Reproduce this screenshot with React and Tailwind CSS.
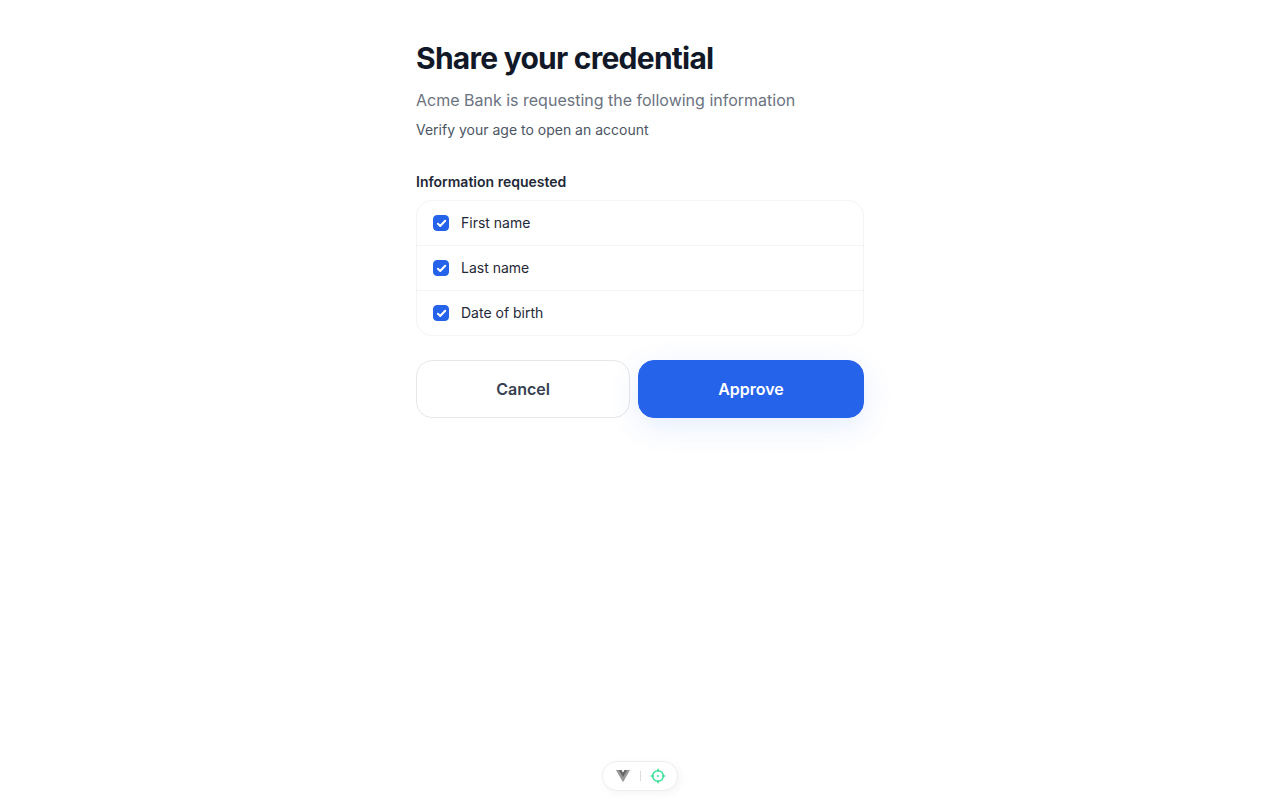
import React, { useState } from 'react';

const requestedFields = [
  { id: 'firstName', label: 'First name' },
  { id: 'lastName', label: 'Last name' },
  { id: 'birthDate', label: 'Date of birth' },
];

const FieldRow = ({ field, checked, onToggle }) => (
  <li>
    <label htmlFor={field.id} className="flex cursor-pointer items-center gap-3 px-4 py-3">
      <span className="grid size-4 shrink-0">
        <input
          id={field.id}
          type="checkbox"
          checked={checked}
          onChange={() => onToggle(field.id)}
          className="peer col-start-1 row-start-1 size-4 appearance-none rounded border border-[#d1d5db] bg-white checked:border-[#2563eb] checked:bg-[#2563eb]"
        />
        <svg
          viewBox="0 0 16 16"
          fill="none"
          stroke="white"
          strokeWidth="2"
          strokeLinecap="round"
          strokeLinejoin="round"
          aria-hidden="true"
          className="pointer-events-none col-start-1 row-start-1 hidden size-4 peer-checked:block"
        >
          <path d="M4.9 8.8 7.2 11 12.2 5.7" />
        </svg>
      </span>
      <span className="text-sm text-[#1f2937]">{field.label}</span>
    </label>
  </li>
);

const DevToolbar = () => (
  <div className="fixed inset-x-0 bottom-[9px] flex justify-center">
    <div className="flex h-[30px] items-center rounded-full border border-[#eeeeee] bg-white pr-[11px] pl-3 shadow-[2px_2px_8px_rgba(0,0,0,0.05)]">
      <button type="button" aria-label="Toggle devtools" className="flex w-4 justify-center">
        <svg width="14" height="12" viewBox="0 0 256 221">
          <path fill="#b3b3b3" d="M204.8 0H256L128 220.8 0 0h97.92L128 51.2 157.44 0h47.36Z" />
          <path fill="#999999" d="m0 0 128 220.8L256 0h-51.2L128 132.48 50.56 0H0Z" />
          <path fill="#666666" d="M50.56 0 128 133.12 204.8 0h-47.36L128 51.2 97.92 0H50.56Z" />
        </svg>
      </button>
      <span className="mx-[9px] h-[10px] w-px bg-[#dddddd]" />
      <button type="button" aria-label="Inspect component" className="flex w-4 justify-center">
        <svg width="16" height="16" viewBox="0 0 24 24" fill="none" stroke="#3adf97" strokeWidth="2.2">
          <circle cx="12" cy="12" r="8" />
          <path strokeLinecap="round" d="M12 2v3M12 19v3M2 12h3M19 12h3" />
          <circle cx="12" cy="12" r="1.5" fill="#3adf97" stroke="none" />
        </svg>
      </button>
    </div>
  </div>
);

const App = () => {
  const [selected, setSelected] = useState(requestedFields.map((field) => field.id));

  const toggleField = (id) => {
    setSelected((current) =>
      current.includes(id) ? current.filter((item) => item !== id) : [...current, id]
    );
  };

  return (
    <div className="min-h-screen bg-white font-['Inter',sans-serif] antialiased">
      <main className="mx-auto max-w-md py-10">
        <h1 className="text-3xl font-bold tracking-tight text-[#111827]">Share your credential</h1>
        <p className="mt-3 text-base text-[#6b7280]">
          Acme Bank is requesting the following information
        </p>
        <p className="mt-2 text-sm text-[#4b5563]">Verify your age to open an account</p>

        <h2 className="mt-8 text-sm font-semibold text-[#1f2937]">Information requested</h2>
        <ul className="mt-2 divide-y divide-[#f3f4f6] rounded-2xl border border-[#f3f4f6]">
          {requestedFields.map((field) => (
            <FieldRow
              key={field.id}
              field={field}
              checked={selected.includes(field.id)}
              onToggle={toggleField}
            />
          ))}
        </ul>

        <div className="mt-6 flex gap-2">
          <button
            type="button"
            className="flex-auto rounded-2xl border border-[#e5e7eb] bg-white px-4 py-4 font-semibold text-[#374151]"
          >
            Cancel
          </button>
          <button
            type="button"
            className="flex-auto rounded-2xl border border-[#2563eb] bg-[#2563eb] px-4 py-4 font-semibold text-white shadow-[0_8px_30px_rgba(37,99,235,0.12)]"
          >
            Approve
          </button>
        </div>
      </main>
      <DevToolbar />
    </div>
  );
};

export default App;
